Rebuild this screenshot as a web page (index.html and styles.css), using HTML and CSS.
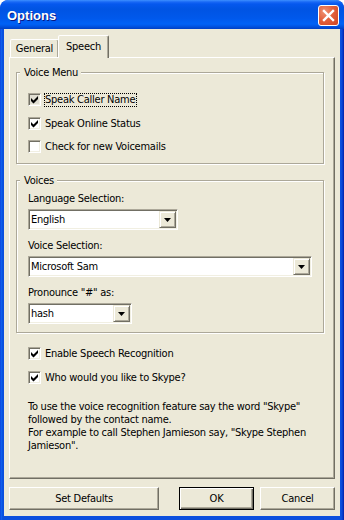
FILE: index.html
```html
<!DOCTYPE html>
<html>
<head>
<meta charset="utf-8">
<title>Options</title>
<link rel="stylesheet" href="styles.css">
</head>
<body>
<div class="window">
  <div class="titlebar">
    <span class="title">Options</span>
    <span class="close">
      <svg width="21" height="21" viewBox="0 0 21 21"><path d="M6 6 L15 15 M15 6 L6 15" stroke="#fff" stroke-width="2.4" stroke-linecap="square" fill="none"/></svg>
    </span>
  </div>
  <div class="client">
    <div class="tabs">
      <div class="tab">General</div>
      <div class="tab active">Speech</div>
    </div>
    <div class="panel">
      <div class="group g-menu">
        <span class="group-title">Voice Menu</span>
        <div class="check-row">
          <span class="cb pressed"><svg width="11" height="11" viewBox="0 0 11 11"><path d="M2 4 L4.5 6.5 L9 2 L9 5 L4.5 9.5 L2 7 Z" fill="#000"/></svg></span>
          <span class="cb-label focus">Speak Caller Name</span>
        </div>
        <div class="check-row">
          <span class="cb"><svg width="11" height="11" viewBox="0 0 11 11"><path d="M2 4 L4.5 6.5 L9 2 L9 5 L4.5 9.5 L2 7 Z" fill="#000"/></svg></span>
          <span class="cb-label">Speak Online Status</span>
        </div>
        <div class="check-row">
          <span class="cb"></span>
          <span class="cb-label">Check for new Voicemails</span>
        </div>
      </div>
      <div class="group g-voices">
        <span class="group-title">Voices</span>
        <div class="field-label">Language Selection:</div>
        <div class="combo w-lang">
          <span class="combo-text">English</span>
          <span class="combo-btn"><svg width="7" height="4" viewBox="0 0 7 4"><path d="M0 0 H7 L3.5 4 Z" fill="#000"/></svg></span>
        </div>
        <div class="field-label">Voice Selection:</div>
        <div class="combo w-voice">
          <span class="combo-text">Microsoft Sam</span>
          <span class="combo-btn"><svg width="7" height="4" viewBox="0 0 7 4"><path d="M0 0 H7 L3.5 4 Z" fill="#000"/></svg></span>
        </div>
        <div class="field-label">Pronounce "#" as:</div>
        <div class="combo w-hash">
          <span class="combo-text">hash</span>
          <span class="combo-btn"><svg width="7" height="4" viewBox="0 0 7 4"><path d="M0 0 H7 L3.5 4 Z" fill="#000"/></svg></span>
        </div>
      </div>
      <div class="check-row loose first-loose">
        <span class="cb"><svg width="11" height="11" viewBox="0 0 11 11"><path d="M2 4 L4.5 6.5 L9 2 L9 5 L4.5 9.5 L2 7 Z" fill="#000"/></svg></span>
        <span class="cb-label">Enable Speech Recognition</span>
      </div>
      <div class="check-row loose">
        <span class="cb"><svg width="11" height="11" viewBox="0 0 11 11"><path d="M2 4 L4.5 6.5 L9 2 L9 5 L4.5 9.5 L2 7 Z" fill="#000"/></svg></span>
        <span class="cb-label">Who would you like to Skype?</span>
      </div>
      <p class="note">To use the voice recognition feature say the word "Skype" followed by the contact name.<br>For example to call Stephen Jamieson say, "Skype Stephen Jamieson".</p>
    </div>
    <div class="buttons">
      <div class="btn wide">Set Defaults</div>
      <div class="btn default">OK</div>
      <div class="btn">Cancel</div>
    </div>
  </div>
</div>
</body>
</html>
```
FILE: styles.css
```css
html, body {
  margin: 0;
  padding: 0;
  background: #fff;
}

body {
  font-family: "DejaVu Sans Condensed", "DejaVu Sans", "Liberation Sans", sans-serif;
  font-stretch: condensed;
  font-size: 11px;
  letter-spacing: -0.25px;
  color: #000;
}

.window {
  width: 344px;
  height: 520px;
  box-sizing: border-box;
  display: flex;
  flex-direction: column;
  border-radius: 8px 8px 0 0;
  background: linear-gradient(to right, #0831D9 0, #166AEE 1px, #0855E6 2px, #0B4FDE 3px, #0B4FDE 341px, #0846D8 342px, #0020A8 344px);
  overflow: hidden;
}

.titlebar {
  height: 29px;
  flex: none;
  display: flex;
  align-items: flex-start;
  padding: 0 5px 0 7px;
  border-radius: 8px 8px 0 0;
  background: linear-gradient(#3D8FFF 0, #1868F5 2px, #0558EE 4px, #0054E3 9px, #0058EB 18px, #0062F6 24px, #0056E6 26px, #0040C4 29px);
}

.title {
  flex: 1;
  margin-top: 8px;
  font-family: "Liberation Sans", Arial, sans-serif;
  font-stretch: normal;
  font-weight: bold;
  font-size: 13px;
  line-height: 15px;
  letter-spacing: 0;
  color: #fff;
  text-shadow: 1px 1px 0 #0A1883;
}

.close {
  width: 21px;
  height: 21px;
  margin-top: 5px;
  box-sizing: border-box;
  border: 1px solid #fff;
  border-radius: 3px;
  background: radial-gradient(circle at 30% 30%, #F09373 0, #E2613D 45%, #CF4420 100%);
  display: flex;
  align-items: center;
  justify-content: center;
}

.close svg {
  display: block;
  margin: -1px;
}

.client {
  flex: 1;
  margin: 0 4px 4px;
  background: #ECE9D8;
  padding: 6px 5px 6px 5px;
  display: flex;
  flex-direction: column;
}

.tabs {
  height: 22px;
  flex: none;
  display: flex;
  align-items: flex-end;
  padding-left: 1px;
}

.tab {
  box-sizing: border-box;
  width: 49px;
  height: 18px;
  border: 1px solid;
  border-bottom: none;
  border-color: #fff #716F64 transparent #fff;
  border-radius: 2px 2px 0 0;
  box-shadow: inset -1px 0 0 #ACA899;
  background: #ECE9D8;
  display: flex;
  align-items: center;
  justify-content: center;
  line-height: 13px;
}

.tab.active {
  position: relative;
  z-index: 1;
  width: 51px;
  height: 23px;
  margin-left: -1px;
  margin-bottom: -1px;
  padding-bottom: 2px;
}

.panel {
  flex: 1;
  box-sizing: border-box;
  border: 1px solid;
  border-color: #fff #716F64 #716F64 #fff;
  box-shadow: inset -1px -1px 0 #ACA899;
  padding: 14px 10px 0 6px;
  display: flex;
  flex-direction: column;
}

.group {
  position: relative;
  box-sizing: border-box;
  border: 1px solid #ACA899;
  box-shadow: inset 1px 1px 0 #fff, 1px 1px 0 #fff;
  display: flex;
  flex-direction: column;
}

.group-title {
  position: absolute;
  top: -7px;
  left: 3px;
  padding: 0 3px 0 4px;
  background: #ECE9D8;
  line-height: 13px;
}

.g-menu {
  padding: 20px 0 10px 11px;
  gap: 10.5px;
}

.g-voices {
  margin-top: 16px;
  padding: 11px 0 8px 11px;
}

.check-row {
  display: flex;
  align-items: center;
  height: 13px;
  line-height: 13px;
}

.cb {
  flex: none;
  display: block;
  width: 13px;
  height: 13px;
  box-sizing: border-box;
  border: 1px solid;
  border-color: #ACA899 #fff #fff #ACA899;
  box-shadow: inset 1px 1px 0 #716F64, inset -1px -1px 0 #F1EFE2;
  background: #fff;
}

.cb.pressed {
  background: #E0DED2;
}

.cb svg {
  display: block;
}

.cb-label {
  margin-left: 4px;
  white-space: nowrap;
}

.cb-label.focus {
  margin-left: 3px;
  border: 1px dotted #000;
  padding: 0 1px 0 0;
  line-height: 12px;
}

.field-label {
  line-height: 13px;
  margin-bottom: 4px;
}

.field-label + .combo + .field-label {
  margin-top: 9px;
}

.combo {
  box-sizing: border-box;
  height: 21px;
  display: flex;
  border: 1px solid;
  border-color: #ACA899 #fff #fff #ACA899;
  box-shadow: inset 1px 1px 0 #716F64, inset -1px -1px 0 #F1EFE2;
  background: #fff;
  padding: 1px;
}

.w-lang { width: 150px; }
.w-voice { width: 284px; }
.w-hash { width: 104px; }

.combo-text {
  flex: 1;
  padding-left: 1px;
  line-height: 17px;
  white-space: nowrap;
}

.combo-btn {
  flex: none;
  box-sizing: border-box;
  width: 17px;
  height: 17px;
  border: 1px solid;
  border-color: #ECE9D8 #716F64 #716F64 #ECE9D8;
  box-shadow: inset 1px 1px 0 #fff, inset -1px -1px 0 #ACA899;
  background: #ECE9D8;
  display: flex;
  align-items: center;
  justify-content: center;
}

.combo-btn svg {
  display: block;
  margin-top: 1px;
}

.loose {
  margin-left: 12px;
  margin-top: 11px;
}

.first-loose {
  margin-top: 14px;
}

.note {
  margin: 16px 0 0 12px;
  width: 300px;
  line-height: 13px;
}

.buttons {
  flex: none;
  margin-top: 8px;
  display: flex;
  gap: 6px;
}

.btn {
  box-sizing: border-box;
  width: 75px;
  height: 23px;
  border: 1px solid;
  border-color: #fff #716F64 #716F64 #fff;
  box-shadow: inset -1px -1px 0 #ACA899;
  display: flex;
  align-items: center;
  justify-content: center;
  line-height: 13px;
}

.btn.wide {
  width: 150px;
  margin-right: auto;
}

.btn.default {
  border-color: #000;
  box-shadow: inset 1px 1px 0 #fff, inset -1px -1px 0 #716F64, inset -2px -2px 0 #ACA899;
}
```
